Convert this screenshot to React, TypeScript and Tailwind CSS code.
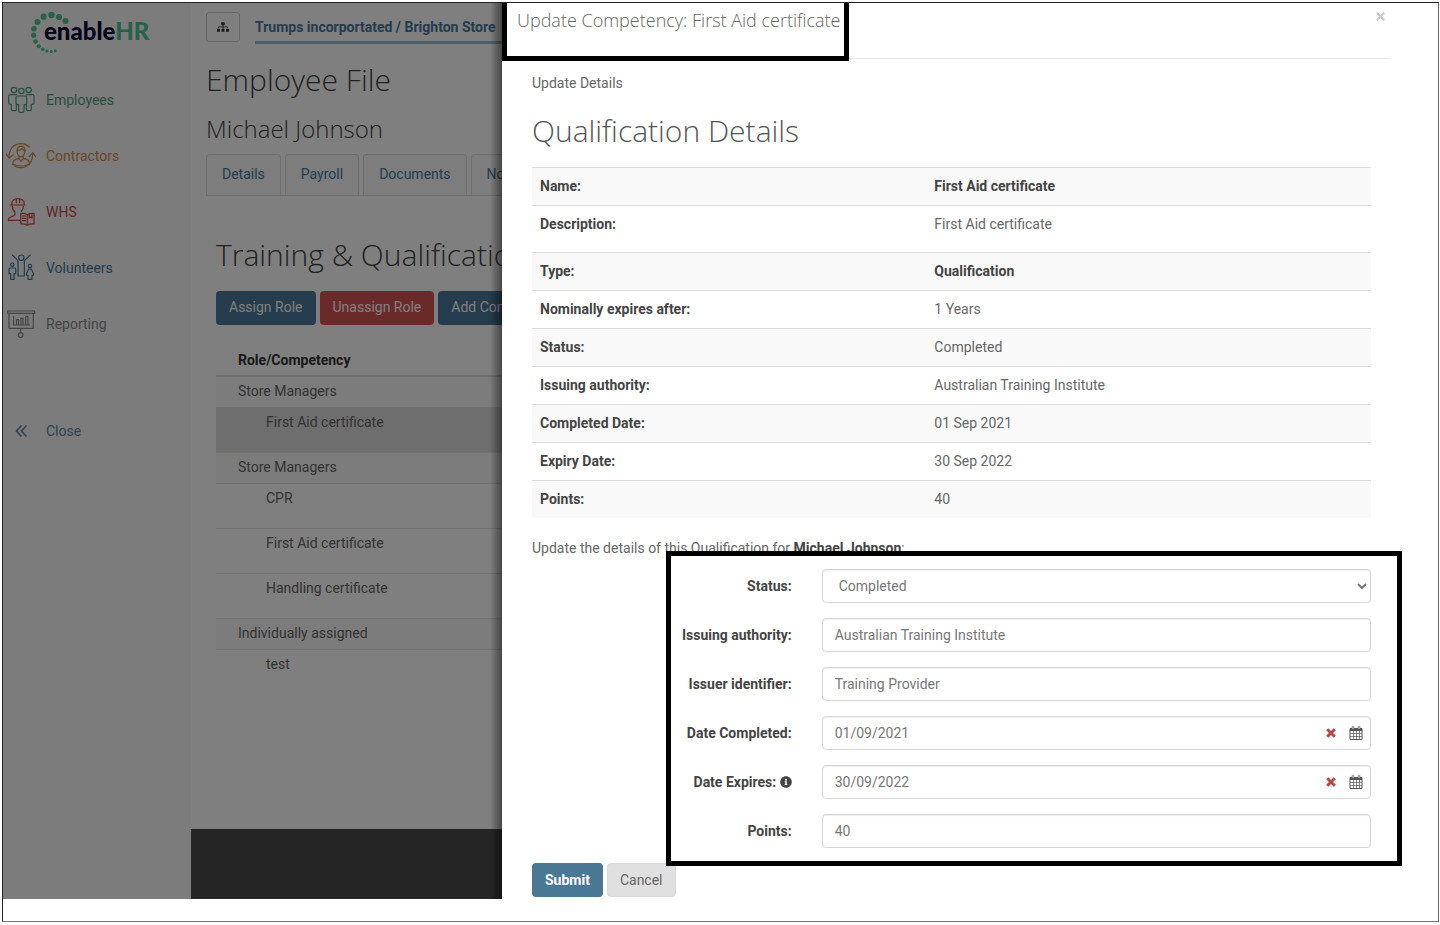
import { useState } from "react";
import type { ReactNode } from "react";
import { FaSitemap, FaInfoCircle, FaCaretDown } from "react-icons/fa";

const iconProps = {
  width: 30,
  height: 30,
  fill: "none",
  stroke: "currentColor",
  strokeWidth: 3.6,
  strokeLinejoin: "round" as const,
  strokeLinecap: "round" as const,
  "aria-hidden": true,
};

const EmployeesIcon = () => (
  <svg {...iconProps} viewBox="18 252 90 90">
    <circle cx="42" cy="267" r="8" />
    <circle cx="64" cy="270" r="8" />
    <circle cx="86" cy="267" r="8" />
    <path d="M49 281H31q-5 0-5 5v20q0 4 5 4h3v15q0 4 4 4h8q3 0 3-4v-15" />
    <path d="M79 281h18q5 0 5 5v20q0 4-5 4h-3v15q0 4-4 4h-8q-3 0-3-4v-15" />
    <path d="M52 285h24q4 0 4 4v18q0 4-5 4h-3v19q0 4-4 4h-8q-4 0-4-4v-19h-3q-5 0-5-4v-18q0-4 4-4z" />
  </svg>
);

const ContractorsIcon = () => (
  <svg {...iconProps} viewBox="18 422 90 90">
    <path d="M27 472c-1-24 14-42 35-42 10 0 19 4 26 10" />
    <path d="M19 462l8 11 12-9" />
    <path d="M98 458c1 26-14 44-36 44-10 0-18-4-24-10" />
    <path d="M88 469l10-12 9 12" />
    <path d="M51 452q0-14 12-14t12 14q0 10-6 15-6 5-12 0-6-5-6-15z" />
    <path d="M52 450q10 1 14-5 3 5 9 5M57 469v6l6 8 7-8v-6" />
    <path d="M38 490q0-13 19-15M70 475q19 2 19 15-10 7-25 7t-26-7" />
  </svg>
);

const WhsIcon = () => (
  <svg {...iconProps} viewBox="18 20 90 90">
    <path d="M35 43q0-18 19-18t19 18M31 44h44M49 26v11M59 26v11" />
    <path d="M37 47q0 13 8 19v6q-4 6-12 8-8 3-8 10h34M70 47q0 9-6 16" />
    <path d="M62 69q12-1 20 4 8-5 20-4v32q-12-1-20 4-8-5-20-4zM82 73v31" />
    <path d="M67 77h10M67 84h10M67 91h10M88 71v12l4-3 4 3V70" />
  </svg>
);

const VolunteersIcon = () => (
  <svg {...iconProps} viewBox="18 187 90 90">
    <circle cx="64" cy="201" r="8" />
    <path d="M37 193l17 17v46h19v-46l18-17" />
    <circle cx="37" cy="222" r="5" />
    <path d="M30 232h14q3 0 3 4v13h-5v17H32v-17h-5v-13q0-4 3-4z" />
    <circle cx="90" cy="226" r="5" />
    <path d="M86 235h8l7 16q-1 4-5 3v12H84v-12q-4 1-5-3z" />
  </svg>
);

const ReportingIcon = () => (
  <svg {...iconProps} viewBox="18 354 90 90">
    <path d="M23 360h81v7H23zM27 367v45h73v-45M62 412v12" />
    <path d="M41 377v25h48M50 400v-14h6v14M63 400v-18h6v18M77 400v-24h7v24" />
    <circle cx="62" cy="432" r="7" />
  </svg>
);

const DoubleChevronIcon = () => (
  <svg width="13" height="14" viewBox="0 0 13 14" fill="none" stroke="currentColor" strokeWidth="1.700" aria-hidden="true">
    <path d="M6.500 1.500L1.500 7l5 5.500M11.500 1.500L6.500 7l5 5.500" />
  </svg>
);

const CalendarIcon = () => (
  <svg width="14" height="14" viewBox="0 0 14 14" fill="none" stroke="currentColor" aria-hidden="true">
    <path d="M1 2.500h12v11H1z" />
    <path d="M1 3.500h12" strokeWidth="3" />
    <path d="M1 7.500h12M1 10.500h12M4.500 5v8.500M7.500 5v8.500M10.500 5v8.500" strokeWidth=".7" />
    <path d="M4 .5v3M10 .5v3" strokeWidth="2.400" />
    <path d="M4 1v2M10 1v2" stroke="#fff" strokeWidth=".9" />
  </svg>
);

const CrossIcon = () => (
  <svg width="10" height="10" viewBox="0 0 10 10" stroke="currentColor" strokeWidth="3" aria-hidden="true">
    <path d="M1.200 1.200l7.600 7.600M8.800 1.200l-7.600 7.600" />
  </svg>
);

const Logo = () => (
  <svg width="124" height="44" viewBox="30 10 124 44" role="img" aria-label="enableHR">
    <g fill="#4ec295">
      <circle cx="65.500" cy="21" r="3" />
      <circle cx="59" cy="17" r="3.100" />
      <circle cx="51.500" cy="15" r="3.200" />
      <circle cx="43.700" cy="16.700" r="3.100" />
      <circle cx="37.500" cy="22" r="3" />
      <circle cx="34" cy="28.700" r="2.800" />
      <circle cx="33.700" cy="35.200" r="2.600" />
      <circle cx="35.500" cy="41.500" r="2.300" />
      <circle cx="38.700" cy="46.200" r="2" />
      <circle cx="42.800" cy="49.300" r="1.800" />
      <circle cx="47" cy="51" r="1.600" />
      <circle cx="51.200" cy="51.500" r="1.500" />
      <circle cx="55.300" cy="51" r="1.400" />
    </g>
    <text x="44" y="40" fontSize="24" className="font-['Lato'] font-black">
      <tspan fill="#04062c">enable</tspan>
      <tspan fill="#4ec295">HR</tspan>
    </text>
  </svg>
);

const menu = [
  { title: "Employees", color: "text-[#4f9f83]", icon: <EmployeesIcon /> },
  { title: "Contractors", color: "text-[#d08f4e]", icon: <ContractorsIcon /> },
  { title: "WHS", color: "text-[#cc4a4a]", icon: <WhsIcon /> },
  { title: "Volunteers", color: "text-[#497897]", icon: <VolunteersIcon /> },
  { title: "Reporting", color: "text-[#8a8a8a]", icon: <ReportingIcon /> },
];

const Sidebar = () => (
  <aside className="w-[188px] shrink-0 bg-[#f8f8f8]">
    <a href="#home" className="ml-[27px] mt-[7px] block">
      <Logo />
    </a>
    <nav className="mt-[18px]">
      {menu.map((item) => (
        <a
          key={item.title}
          href={`#${item.title.toLowerCase()}`}
          className={`flex h-14 items-center gap-[10px] pl-[3px] ${item.color}`}
        >
          {item.icon}
          {item.title}
        </a>
      ))}
    </nav>
    <a href="#close" className="mt-[51px] flex h-14 items-center gap-[18px] pl-3 text-[#5f87a3]">
      <DoubleChevronIcon />
      Close
    </a>
  </aside>
);

const tabs = ["Details", "Payroll", "Documents", "Notes"];

const roles = [
  { name: "Store Managers", group: true },
  { name: "First Aid certificate", active: true },
  { name: "Store Managers", group: true },
  { name: "CPR" },
  { name: "First Aid certificate" },
  { name: "Handling certificate" },
  { name: "Individually assigned", group: true },
  { name: "test" },
];

const EmployeeFile = () => (
  <main className="flex min-w-0 flex-1 flex-col overflow-hidden whitespace-nowrap bg-white">
    <div className="pl-[15px]">
      <div className="mt-[9px] flex gap-[15px]">
        <button
          type="button"
          aria-label="Organisation"
          className="flex h-[30px] w-[34px] shrink-0 items-center justify-center rounded-[3px] border border-[#ccc] text-[#333]"
        >
          <FaSitemap className="h-3 w-3" />
        </button>
        <a
          href="#store"
          className="flex h-8 shrink-0 items-center gap-[6px] border-b-[3px] border-[#9dbdd3] font-bold text-[#497897]"
        >
          Trumps incorportated / Brighton Store
          <FaCaretDown className="h-3 w-3" />
        </a>
      </div>
      <h1 className="mt-[18px] font-['Open_Sans'] text-[30px] font-light leading-9 text-[#444]">
        Employee File
      </h1>
      <h2 className="mt-[15px] font-['Open_Sans'] text-2xl font-light leading-8 text-[#444]">
        Michael Johnson
      </h2>
      <ul className="mt-[9px] flex border-b border-[#ddd]">
        {tabs.map((tab) => (
          <li key={tab} className="mr-1 shrink-0">
            <a
              href={`#${tab.toLowerCase()}`}
              className="block rounded-t border border-b-0 border-[#ddd] bg-[#fafafa] px-[15px] pb-[11px] pt-[9px] text-[#497897]"
            >
              {tab}
            </a>
          </li>
        ))}
      </ul>
    </div>
    <div className="pl-[25px]">
      <h1 className="mt-[41px] font-['Open_Sans'] text-[30px] font-light leading-9 text-[#444]">
        Training &amp; Qualifications
      </h1>
      <div className="mt-[18px] flex gap-1 text-white">
        <button type="button" className="h-[34px] shrink-0 rounded bg-[#497897] px-[13px] pb-0.5">
          Assign Role
        </button>
        <button type="button" className="h-[34px] shrink-0 rounded bg-[#d65555] px-[13px] pb-0.5">
          Unassign Role
        </button>
        <button type="button" className="h-[34px] shrink-0 rounded bg-[#497897] px-[13px] pb-0.5">
          Add Competency
        </button>
      </div>
      <table className="mt-5 w-full text-left text-[#666]">
        <thead>
          <tr className="border-b-2 border-[#ddd] text-[#333]">
            <th className="py-[5px] pl-[22px] font-bold">Role/Competency</th>
          </tr>
        </thead>
        <tbody>
          {roles.map((role, i) => (
            <tr
              key={i}
              className={`border-b border-[#e4e4e4] ${
                role.active ? "bg-[#ddd]" : role.group ? "bg-[#f9f9f9]" : "last:border-b-0"
              }`}
            >
              <td className={role.group ? "pb-[6px] pl-[22px] pt-1" : "pb-5 pl-[50px] pt-1"}>
                {role.name}
              </td>
            </tr>
          ))}
        </tbody>
      </table>
    </div>
    <footer className="mt-auto h-[70px] bg-[#4a4a4a]" />
  </main>
);

const details = [
  { label: "Name:", value: "First Aid certificate", strong: true },
  { label: "Description:", value: "First Aid certificate", tall: true },
  { label: "Type:", value: "Qualification", strong: true },
  { label: "Nominally expires after:", value: "1 Years" },
  { label: "Status:", value: "Completed" },
  { label: "Issuing authority:", value: "Australian Training Institute" },
  { label: "Completed Date:", value: "01 Sep 2021" },
  { label: "Expiry Date:", value: "30 Sep 2022" },
  { label: "Points:", value: "40" },
];

const control =
  "block h-[34px] w-full rounded border border-[#d5d5d5] bg-white text-sm text-[#777] shadow-[inset_0_1px_1px_rgba(0,0,0,0.06)]";

const Row = ({ id, label, children }: { id: string; label: ReactNode; children: ReactNode }) => (
  <div className="mb-[15px] flex items-center">
    <label htmlFor={id} className="w-1/3 px-[15px] text-right font-bold text-[#444]">
      {label}
    </label>
    <div className="w-2/3 px-[15px]">{children}</div>
  </div>
);

const DateField = ({ id, initial }: { id: string; initial: string }) => {
  const [value, setValue] = useState(initial);
  return (
    <div className="relative">
      <input
        id={id}
        type="text"
        value={value}
        onChange={(e) => setValue(e.target.value)}
        className={`${control} px-3`}
      />
      <div className="absolute inset-y-0 right-2 flex items-center gap-[13px]">
        <button type="button" aria-label="Clear date" className="text-[#b94743]" onClick={() => setValue("")}>
          <CrossIcon />
        </button>
        <button type="button" aria-label="Pick date" className="text-[#555]">
          <CalendarIcon />
        </button>
      </div>
    </div>
  );
};

const CompetencyPanel = () => (
  <section className="min-w-0 flex-1 bg-white pr-[47px] text-[#666]">
    <header className="flex h-14 items-start justify-between border-b border-[#e5e5e5] pl-[15px]">
      <h4 className="relative mt-[7px] font-['Open_Sans'] text-lg font-light leading-5">
        Update Competency: First Aid certificate
        <span className="absolute -bottom-[31px] -left-[15px] -right-2 -top-[7px] border-[5px] border-t-0 border-black" />
      </h4>
      <button type="button" aria-label="Close" className="mr-[6px] mt-[9px] text-[#ccc]">
        <svg width="9" height="9" viewBox="0 0 9 9" stroke="currentColor" strokeWidth="2" aria-hidden="true">
          <path d="M.7.7l7.600 7.600M8.300.7L.7 8.300" />
        </svg>
      </button>
    </header>
    <div className="pl-[30px] pr-5 pt-[14px]">
      <p>Update Details</p>
      <h2 className="mt-5 font-['Open_Sans'] text-[30px] font-light leading-9 text-[#555]">
        Qualification Details
      </h2>
      <table className="mt-[18px] w-full table-fixed text-left">
        <tbody>
          {details.map((row) => (
            <tr key={row.label} className="border-t border-[#ddd] odd:bg-[#f9f9f9]">
              <th className="w-[47%] px-2 pb-[9px] pt-2 align-top font-bold text-[#444]">{row.label}</th>
              <td
                className={`px-2 pt-2 align-top ${row.tall ? "pb-[18px]" : "pb-[9px]"} ${
                  row.strong ? "font-bold text-[#444]" : ""
                }`}
              >
                {row.value}
              </td>
            </tr>
          ))}
        </tbody>
      </table>
      <p className="mt-5">
        Update the details of this Qualification for <b className="text-[#444]">Michael Johnson</b>:
      </p>
      <form className="mt-[11px]" onSubmit={(e) => e.preventDefault()}>
        <div className="relative -mx-[15px]">
          <Row id="status" label="Status:">
            <select id="status" defaultValue="Completed" className={`${control} pl-3 pr-1`}>
              <option>Completed</option>
              <option>Incomplete</option>
            </select>
          </Row>
          <Row id="authority" label="Issuing authority:">
            <input id="authority" type="text" defaultValue="Australian Training Institute" className={`${control} px-3`} />
          </Row>
          <Row id="issuer" label="Issuer identifier:">
            <input id="issuer" type="text" defaultValue="Training Provider" className={`${control} px-3`} />
          </Row>
          <Row id="completed" label="Date Completed:">
            <DateField id="completed" initial="01/09/2021" />
          </Row>
          <Row
            id="expires"
            label={
              <>
                Date Expires: <FaInfoCircle className="inline h-3 w-3 align-[-1px]" />
              </>
            }
          >
            <DateField id="expires" initial="30/09/2022" />
          </Row>
          <Row id="points" label="Points:">
            <input id="points" type="text" defaultValue="40" className={`${control} px-3`} />
          </Row>
          <div className="pointer-events-none absolute -bottom-[2px] -right-4 -top-[18px] left-[149px] h-[315px] border-[5px] border-black" />
        </div>
        <div className="flex gap-1">
          <button type="submit" className="h-[34px] rounded bg-[#497897] px-[13px] font-bold text-white">
            Submit
          </button>
          <button type="button" className="h-[34px] rounded border border-[#d8d8d8] bg-[#e0e0e0] px-3">
            Cancel
          </button>
        </div>
      </form>
    </div>
  </section>
);

export default function App() {
  return (
    <div className="flex min-h-screen bg-white pb-[3px] pl-0.5 pr-px pt-0.5 font-['Roboto',sans-serif] text-sm leading-5">
      <div className="flex w-full border border-[#222] border-b-[#777] border-r-[#666]">
        <div className="relative mb-[22px] flex w-[499px] shrink-0 overflow-hidden">
          <Sidebar />
          <EmployeeFile />
          {/* modal backdrop, with the drawer's shadow falling on it */}
          <div className="absolute inset-0 bg-black/50" />
          <div className="absolute inset-y-0 right-0 w-3 bg-linear-to-l from-black/45 to-transparent" />
        </div>
        <CompetencyPanel />
      </div>
    </div>
  );
}
